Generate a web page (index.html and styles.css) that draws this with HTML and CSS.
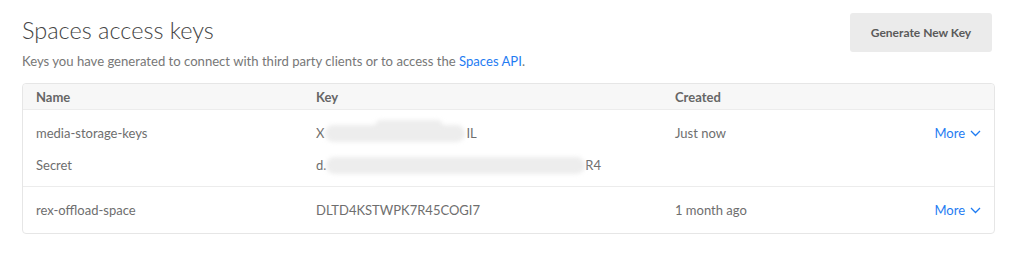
FILE: index.html
```html
<!DOCTYPE html>
<html>
  <head>
    <title>Spaces access keys</title>
    <link rel="stylesheet" href="styles.css">
  </head>
  <body>
    <div class="page">
      <div class="header">
        <div>
          <h2>Spaces access keys</h2>
          <p class="intro">
            Keys you have generated to connect with third party clients or to access the
            <a href="#">Spaces API</a>.
          </p>
        </div>
        <button class="generate-btn">Generate New Key</button>
      </div>

      <div class="keys-table">
        <div class="row head">
          <div class="col-name">Name</div>
          <div class="col-key">Key</div>
          <div class="col-created">Created</div>
          <div class="col-more"></div>
        </div>

        <div class="row key-row">
          <div class="col-name">
            <div class="line">media-storage-keys</div>
            <div class="line">Secret</div>
          </div>
          <div class="col-key">
            <div class="line">X<span class="blur blur-short"><span class="bump"></span></span>IL</div>
            <div class="line">d.<span class="blur blur-long"></span>R4</div>
          </div>
          <div class="col-created">
            <div class="line">Just now</div>
          </div>
          <div class="col-more">
            <div class="line"><a href="#" class="more">More
              <svg width="11" height="7" viewBox="0 0 11 7"><path d="M1 1l4.5 4.5L10 1" fill="none" stroke="currentColor" stroke-width="1.3"/></svg>
            </a></div>
          </div>
        </div>

        <div class="row key-row">
          <div class="col-name"><div class="line">rex-offload-space</div></div>
          <div class="col-key"><div class="line">DLTD4KSTWPK7R45COGI7</div></div>
          <div class="col-created"><div class="line">1 month ago</div></div>
          <div class="col-more">
            <div class="line"><a href="#" class="more">More
              <svg width="11" height="7" viewBox="0 0 11 7"><path d="M1 1l4.5 4.5L10 1" fill="none" stroke="currentColor" stroke-width="1.3"/></svg>
            </a></div>
          </div>
        </div>
      </div>
    </div>
  </body>
</html>
```

FILE: styles.css
```css
body {
  font-family: "Lato", "Open Sans", sans-serif;
  margin: 0;
  background-color: #ffffff;
  color: #6e6e6e;
}
.page {
  padding: 13px 29px 0 22px;
}
.header {
  display: flex;
  justify-content: space-between;
  align-items: flex-start;
}
.header h2 {
  margin: 3px 0 0;
  font-size: 23.5px;
  font-weight: 300;
  color: #444;
  line-height: 28px;
}
.intro {
  margin: 8px 0 0;
  font-size: 13.1px;
  line-height: 18px;
  color: #777;
}
.intro a {
  color: #1f7cf2;
  text-decoration: none;
}
.generate-btn {
  margin-right: 3px;
  width: 142px;
  height: 39px;
  background: #ebebeb;
  color: #5a5a5a;
  border: none;
  border-radius: 3px;
  font-family: inherit;
  font-size: 12px;
  font-weight: 700;
  cursor: pointer;
}
.keys-table {
  margin-top: 13px;
  border: 1px solid #e6e6e6;
  border-radius: 4px;
  font-size: 13px;
}
.row {
  display: flex;
  padding: 0 13px;
}
.row.head {
  background: #f7f7f7;
  height: 25px;
  align-items: center;
  font-weight: 700;
  color: #666;
  border-bottom: 1px solid #ececec;
  border-radius: 4px 4px 0 0;
}
.key-row {
  padding-top: 12px;
  padding-bottom: 10px;
}
.key-row + .key-row {
  border-top: 1px solid #ececec;
  padding-bottom: 12px;
}
.line {
  height: 22px;
  line-height: 22px;
  display: flex;
  align-items: center;
}
.line + .line {
  margin-top: 10px;
}
.col-name {
  width: 280px;
}
.col-key {
  width: 359px;
}
.col-created {
  flex: 1;
}
.col-more {
  width: 60px;
  display: flex;
  justify-content: flex-end;
}
.more {
  color: #1f7cf2;
  text-decoration: none;
  display: flex;
  align-items: center;
  gap: 5px;
}
.blur {
  position: relative;
  display: inline-block;
  height: 17px;
  background: #ededed;
  border-radius: 9px;
  filter: blur(2px);
}
.blur-short {
  width: 140px;
  margin: 0 1px 0 1px;
}
.blur-long {
  width: 259px;
}
.bump {
  position: absolute;
  left: 50px;
  top: -5px;
  width: 68px;
  height: 12px;
  border-radius: 8px;
  background: #ededed;
}
```
